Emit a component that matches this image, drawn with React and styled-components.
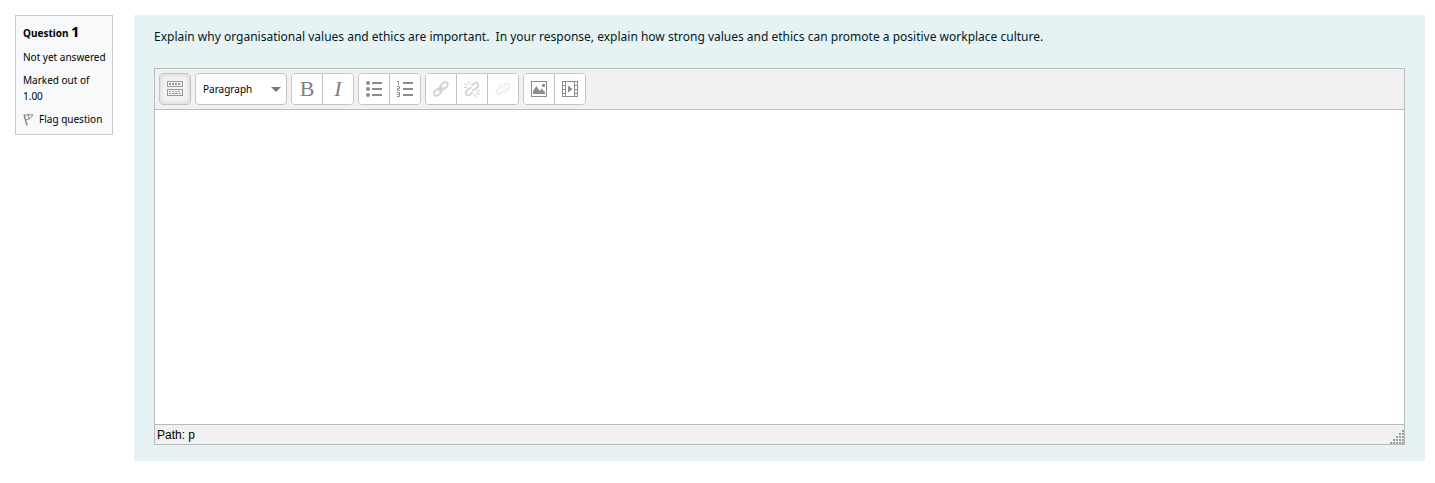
import { useState } from "react";
import styled, { createGlobalStyle } from "styled-components";

function KitchenSinkIcon() {
  return (
    <svg width="18" height="18" viewBox="0 0 18 18" fill="none" stroke="#999" shapeRendering="crispEdges" aria-hidden="true">
      <rect x="1.5" y="1.5" width="15" height="5" />
      <path d="M3 3.5h12M3 4.5h12" strokeDasharray="2 1" />
      <rect x="1.5" y="9.5" width="15" height="6" />
      <path d="M3 11.5h12" strokeDasharray="2 1" />
      <path d="M3 13.5h2M6 13.5h6M13 13.5h2" />
    </svg>
  );
}

function BulletIcon() {
  return (
    <svg width="18" height="18" viewBox="0 0 18 18" fill="#8c8c8c" aria-hidden="true">
      <circle cx="3" cy="3" r="2" />
      <circle cx="3" cy="9" r="2" />
      <circle cx="3" cy="15" r="2" />
      <path d="M7 2h10v2H7zM7 8h10v2H7zM7 14h10v2H7z" />
    </svg>
  );
}

function NumberIcon() {
  return (
    <svg width="18" height="18" viewBox="0 0 18 18" aria-hidden="true">
      <path d="M7 2h10v2H7zM7 8h10v2H7zM7 14h10v2H7z" fill="#8c8c8c" />
      <path d="M1 1.5h1.5V5M1 6.5h2.5v2H1.5v2H4M1 12.5h2.5v4H1M1.5 14.5h2" fill="none" stroke="#8c8c8c" />
    </svg>
  );
}

function LinkIcon() {
  return (
    <svg width="18" height="18" viewBox="0 0 18 18" fill="none" stroke="#d0d0d0" strokeWidth="1.7" aria-hidden="true">
      <rect x="-4.2" y="-2.6" width="8.4" height="5.2" rx="2.6" transform="translate(5.6 12.2) rotate(-43)" />
      <rect x="-4.2" y="-2.6" width="8.4" height="5.2" rx="2.6" transform="translate(12 5.8) rotate(-43)" />
      <path d="M6.5 11.3l4.8-4.6" />
    </svg>
  );
}

function UnlinkIcon() {
  return (
    <svg width="18" height="18" viewBox="0 0 18 18" fill="none" stroke="#d0d0d0" strokeWidth="1.6" aria-hidden="true">
      <path d="M8.3 5.8l2.6-2.5q2-1.6 3.8.1q1.5 1.8-.2 3.7l-2.7 2.5q-1.2.8-2.4.3" />
      <path d="M9.7 12.2l-2.6 2.5q-2 1.6-3.8-.1q-1.5-1.8.2-3.7l2.7-2.5q1.2-.8 2.4-.3" />
      <path d="M5.5 1l1 3M1.5 3.5l3 2M1 7.5h3M12.5 17l-1-3M16.5 14.5l-3-2M17 10.5h-3" strokeWidth="1.1" />
    </svg>
  );
}

function AutoLinkIcon() {
  return (
    <svg width="18" height="18" viewBox="0 0 18 18" fill="none" stroke="#eee" strokeWidth="1.9" aria-hidden="true">
      <path d="M9 6.5l2-2q2-1.6 3.8 0q1.5 1.8-.2 3.7l-2 1.9q-1.6.7-3-.6" />
      <path d="M9 11.5l-2 2q-2 1.6-3.8 0q-1.5-1.8.2-3.7l2-1.9q1.6-.7 3 .6M5 5l2 1M11 12l2 1" />
    </svg>
  );
}

function ImageIcon() {
  return (
    <svg width="18" height="18" viewBox="0 0 18 18" aria-hidden="true">
      <rect x="1.5" y="1.5" width="15" height="15" fill="none" stroke="#8c8c8c" />
      <path d="M3 14v-3l3.5-5L9.5 11l2-2.5L15 12v2z" fill="#8c8c8c" />
      <rect x="12" y="4" width="3" height="3" rx="1" fill="#8c8c8c" />
    </svg>
  );
}

function MediaIcon() {
  return (
    <svg width="18" height="18" viewBox="0 0 18 18" fill="none" stroke="#8c8c8c" aria-hidden="true">
      <path d="M1.5 1v16M4.5 1v16M13.5 1v16M16.5 1v16" />
      <path d="M1 1.5h4M1 5.5h4M1 9.5h4M1 13.5h4M1 16.5h4M13 1.5h4M13 5.5h4M13 9.5h4M13 13.5h4M13 16.5h4M5 1.5h8M5 16.5h8" />
      <path d="M7 5.5v7l4.5-3.5z" fill="#8c8c8c" stroke="none" />
    </svg>
  );
}

function FlagIcon() {
  return (
    <svg width="12" height="14" viewBox="0 0 12 14" fill="none" stroke="#888" aria-hidden="true">
      <path d="M1 1.5l3 11" strokeWidth="1.4" />
      <path d="M1.5 2.5L5 1.5l5 .5L7 5.5L2.5 7M5 1.5l1 4" />
    </svg>
  );
}

function ResizeGrip() {
  return (
    <svg width="15" height="15" viewBox="0 0 15 15" fill="#999" shapeRendering="crispEdges" aria-hidden="true">
      {[0, 1, 2, 3, 4].map((row) =>
        Array.from({ length: row + 1 }, (_, i) => (
          <rect key={`${row}-${i}`} x={13 - i * 3} y={row * 3 + 1} width="2" height="2" />
        ))
      )}
    </svg>
  );
}

function App() {
  const [answer, setAnswer] = useState("");

  return (
    <Question>
      <GlobalStyle />
      <InfoPanel>
        <QuestionTitle>
          Question <QuestionNumber>1</QuestionNumber>
        </QuestionTitle>
        <InfoText>Not yet answered</InfoText>
        <InfoText>Marked out of 1.00</InfoText>
        <FlagLink href="#flag">
          <FlagIcon />
          Flag question
        </FlagLink>
      </InfoPanel>
      <Content>
        <QuestionText id="question-text">
          Explain why organisational values and ethics are important.&nbsp; In your response, explain how strong values and ethics can promote a positive workplace culture.
        </QuestionText>
        <Editor>
          <Toolbar role="toolbar" aria-label="Editor">
            <ButtonGroup>
              <ToolButton type="button" aria-label="Toggle toolbar" $active><KitchenSinkIcon /></ToolButton>
            </ButtonGroup>
            <SelectBox>
              <FormatSelect aria-label="Format" defaultValue="p">
                <option value="p">Paragraph</option>
                <option value="h3">Heading</option>
              </FormatSelect>
              <SelectArrow />
            </SelectBox>
            <ButtonGroup>
              <ToolButton type="button" aria-label="Bold"><Letter>B</Letter></ToolButton>
              <ToolButton type="button" aria-label="Italic"><Letter $italic>I</Letter></ToolButton>
            </ButtonGroup>
            <ButtonGroup>
              <ToolButton type="button" aria-label="Bulleted list"><BulletIcon /></ToolButton>
              <ToolButton type="button" aria-label="Numbered list"><NumberIcon /></ToolButton>
            </ButtonGroup>
            <ButtonGroup>
              <ToolButton type="button" aria-label="Insert link" disabled><LinkIcon /></ToolButton>
              <ToolButton type="button" aria-label="Unlink" disabled><UnlinkIcon /></ToolButton>
              <ToolButton type="button" aria-label="Prevent automatic linking" disabled><AutoLinkIcon /></ToolButton>
            </ButtonGroup>
            <ButtonGroup>
              <ToolButton type="button" aria-label="Insert image"><ImageIcon /></ToolButton>
              <ToolButton type="button" aria-label="Insert media"><MediaIcon /></ToolButton>
            </ButtonGroup>
          </Toolbar>
          <Answer
            aria-labelledby="question-text"
            value={answer}
            onChange={(e) => setAnswer(e.target.value)}
          />
          <StatusBar>
            <span>Path: p</span>
            <ResizeGrip />
          </StatusBar>
        </Editor>
      </Content>
    </Question>
  );
}

const GlobalStyle = createGlobalStyle`
  * {
    box-sizing: border-box;
  }

  body {
    margin: 0;
    background: #fff;
    color: #000;
    font-family: "Noto Sans", "Open Sans", sans-serif;
    font-size: 12px;
  }
`;

const Question = styled.div`
  display: flex;
  align-items: flex-start;
  gap: 21px;
  padding: 15px 10px 15px 15px;
`;

const InfoPanel = styled.aside`
  display: flex;
  flex-direction: column;
  flex: none;
  gap: 7px;
  width: 98px;
  padding: 6px 4px 6px 7px;
  border: 1px solid #cacaca;
  background: #f7f9fa;
  font-size: 10px;
  line-height: 16px;
`;

const QuestionTitle = styled.h3`
  margin: 0;
  font-size: 10px;
  line-height: 18px;
  white-space: nowrap;
`;

const QuestionNumber = styled.span`
  font-size: 15px;
`;

const InfoText = styled.div`
  white-space: normal;
`;

const FlagLink = styled.a`
  display: flex;
  align-items: center;
  gap: 4px;
  color: #000;
  line-height: 17px;
  text-decoration: none;
  white-space: nowrap;
`;

const Content = styled.main`
  flex: 1;
  min-width: 0;
  padding: 12px 20px 16px;
  background: #e6f2f4;
`;

const QuestionText = styled.p`
  margin: 0 0 21px;
  color: #001a1e;
  line-height: 20px;
`;

const Editor = styled.div`
  border: 1px solid #b7bcbd;
  background: #fff;
`;

const Toolbar = styled.div`
  display: flex;
  flex-wrap: wrap;
  gap: 4px;
  padding: 4px;
  border-bottom: 1px solid #b7bcbd;
  background: #f1f1f1;
`;

const ButtonGroup = styled.div`
  display: flex;
  overflow: hidden;
  border: 1px solid #c4c4c4;
  border-radius: 4px;
  background: #fff;
`;

const ToolButton = styled.button`
  display: flex;
  align-items: center;
  justify-content: center;
  width: 30px;
  height: 30px;
  padding: 0;
  border: 0;
  background: ${(props) => (props.$active ? "#f5f5f5" : "#fff")};
  box-shadow: ${(props) => (props.$active ? "inset 0 0 6px #ccc" : "none")};

  & + & {
    width: 31px;
    border-left: 1px solid #c4c4c4;
  }
`;

const Letter = styled.span`
  color: #808080;
  font-family: "Liberation Serif", serif;
  font-size: 22px;
  font-style: ${(props) => (props.$italic ? "italic" : "normal")};
  line-height: 30px;
`;

const SelectBox = styled.div`
  position: relative;
  width: 92px;
`;

const FormatSelect = styled.select`
  width: 100%;
  height: 32px;
  padding: 0 20px 0 7px;
  appearance: none;
  border: 1px solid #c4c4c4;
  border-radius: 4px;
  background: #fff;
  color: #000;
  font-family: inherit;
  font-size: 10px;
`;

const SelectArrow = styled.span`
  position: absolute;
  top: 14px;
  right: 6px;
  border: 5px solid transparent;
  border-top-color: #777;
  border-bottom: 0;
  pointer-events: none;
`;

const Answer = styled.textarea`
  display: block;
  width: 100%;
  height: 314px;
  padding: 8px;
  border: 0;
  outline: 0;
  resize: none;
  font: inherit;
`;

const StatusBar = styled.div`
  display: flex;
  align-items: flex-end;
  justify-content: space-between;
  height: 20px;
  padding-left: 2px;
  border-top: 1px solid #b7bcbd;
  background: #f1f1f1;
  font-family: "Liberation Sans", Arial, sans-serif;
  font-size: 12px;
  line-height: 17px;
`;

export default App;
